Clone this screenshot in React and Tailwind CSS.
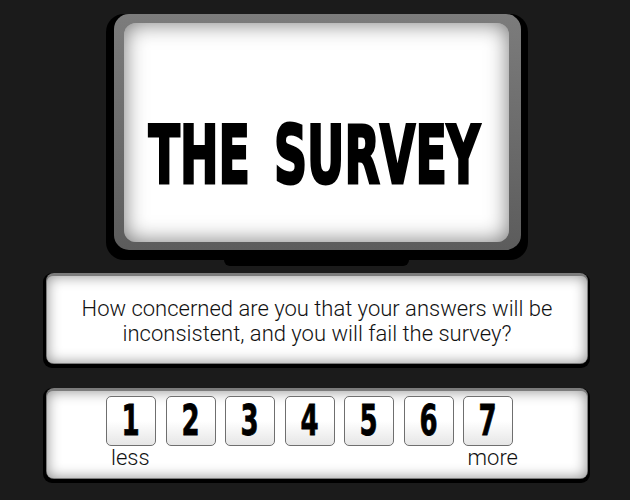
import React from "react";

const DIGITS = [1, 2, 3, 4, 5, 6, 7];

function Panel({ children }) {
  return (
    <div className="w-[547px] rounded-[9px] bg-black pl-[3px] pr-[2px] pb-[4px]">
      <div className="rounded-[8px] bg-[#7c7c7c] pt-[3px] px-[1px] pb-[1px]">
        <div className="h-[87px] rounded-[6px] bg-white shadow-[inset_0_0_14px_rgba(0,0,0,0.45)]">
          {children}
        </div>
      </div>
    </div>
  );
}

export default function App() {
  return (
    <div className="w-[630px] h-[500px] bg-[#1b1b1b] flex flex-col items-center pt-[14px] pl-[3px] font-['Roboto',sans-serif]">
      {/* TV */}
      <div className="w-[422px] rounded-[18px] bg-black pl-[8px] pr-[7px] pb-[10px]">
        <div className="rounded-[15px] bg-gradient-to-b from-[#7c7c7c] to-[#5c5c5c] pt-[9px] pl-[10px] pr-[12px] pb-[8px]">
          <div className="h-[219px] rounded-[12px] bg-white shadow-[inset_0_0_22px_rgba(0,0,0,0.55)] flex items-center justify-center">
            <span className="inline-block whitespace-nowrap scale-x-[0.575] text-[80px] leading-none font-bold text-black [word-spacing:14px] [-webkit-text-stroke:3px_black] font-['DejaVu_Sans',sans-serif] pt-[46px] -ml-[4px]">
              THE SURVEY
            </span>
          </div>
        </div>
      </div>
      {/* stand */}
      <div className="w-[185px] h-[6px] rounded-b-[6px] bg-black" />

      <div className="mt-[7px]">
        <Panel>
          <div className="h-full flex items-center justify-center pt-[2px] text-center text-[22px] font-light leading-[25px] text-[#111]">
            <p>
              How concerned are you that your answers will be
              <br />
              inconsistent, and you will fail the survey?
            </p>
          </div>
        </Panel>
      </div>

      <div className="mt-[20px]">
        <Panel>
          <div className="pt-[5px] pl-[59px]">
            <div className="flex gap-[9.5px]">
              {DIGITS.map((d) => (
                <div
                  key={d}
                  className="w-[50px] h-[50px] rounded-[5px] border border-[#6f6f6f] bg-gradient-to-b from-white via-white to-[#e6e6e6] flex items-center justify-center"
                >
                  <span className="inline-block scale-x-[0.62] text-[42px] leading-none font-bold text-black [-webkit-text-stroke:0.8px_black] font-['DejaVu_Sans',sans-serif]">
                    {d}
                  </span>
                </div>
              ))}
            </div>
            <div className="flex justify-between w-[412px] text-[22px] font-light leading-none text-[#111] mt-[1px]">
              <span className="pl-[5px]">less</span>
              <span>more</span>
            </div>
          </div>
        </Panel>
      </div>
    </div>
  );
}
